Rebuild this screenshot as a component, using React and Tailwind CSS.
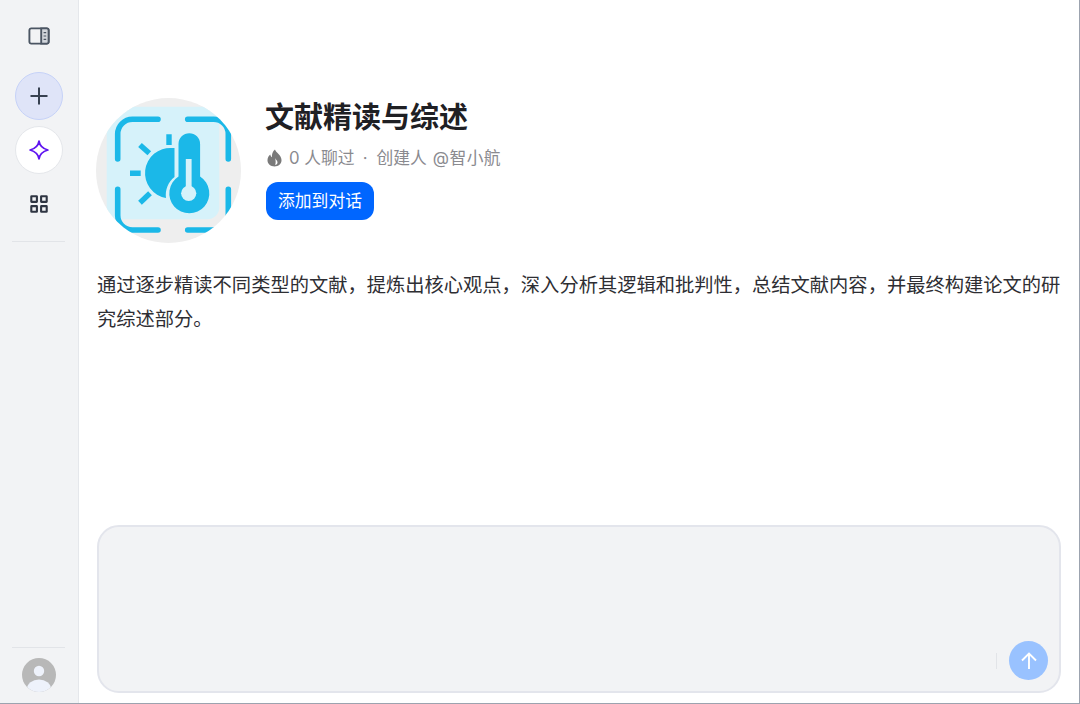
import React from "react";

function PanelIcon() {
  return (
    <svg width="22" height="18" viewBox="0 0 22 18" fill="none">
      <rect x="1.4" y="1.4" width="19.2" height="15.2" rx="1.8" stroke="#4b5563" strokeWidth="1.9" />
      <path d="M13.2 1.4H18.8a1.8 1.8 0 0 1 1.8 1.8V14.8a1.8 1.8 0 0 1-1.8 1.8H13.2Z" fill="#d1d5db" stroke="#4b5563" strokeWidth="1.9" />
      <path d="M15.6 5.6h2.6M15.6 9h2.6M15.6 12.4h2.6" stroke="#4b5563" strokeWidth="1.2" />
    </svg>
  );
}

function Sparkle() {
  return (
    <svg width="22" height="22" viewBox="0 0 22 22" fill="none">
      <path d="M11 2.1C11.6 6 13.4 9.2 19.9 11C13.4 12.8 11.6 16 11 19.9C10.4 16 8.6 12.8 2.1 11C8.6 9.2 10.4 6 11 2.1Z" stroke="#5f14f0" strokeWidth="1.8" strokeLinejoin="round" />
    </svg>
  );
}

function Grid() {
  return (
    <svg width="20" height="20" viewBox="0 0 20 20" fill="none" stroke="#2f3542" strokeWidth="2.1">
      <rect x="2.3" y="2.3" width="5.6" height="5.6" rx="0.3" />
      <rect x="12.1" y="2.3" width="5.6" height="5.6" rx="0.3" />
      <rect x="2.3" y="12.1" width="5.6" height="5.6" rx="0.3" />
      <rect x="12.1" y="12.1" width="5.6" height="5.6" rx="0.3" />
    </svg>
  );
}

function Logo() {
  const c = "#1bb8e8";
  const bg = "#d6f2fa";
  return (
    <svg width="145" height="145" viewBox="0 0 145 145" className="block">
      <defs>
        <clipPath id="circ"><circle cx="72.5" cy="72.5" r="72.5" /></clipPath>
      </defs>
      <circle cx="72.5" cy="72.5" r="72.5" fill="#eeeeee" />
      <g clipPath="url(#circ)">
        <rect x="10.7" y="8.7" width="112.6" height="112.6" rx="12" fill={bg} />
        <g fill="none" stroke={c} strokeWidth="5.6" strokeLinecap="round">
          <path d="M21.7 61V36a14.7 14.7 0 0 1 14.7-14.7H62" />
          <path d="M91.7 21.3H117.6a14.7 14.7 0 0 1 14.7 14.7V61" />
          <path d="M21.7 91.3V117.3a14.7 14.7 0 0 0 14.7 14.7H62" />
          <path d="M91.7 132H117.6a14.7 14.7 0 0 0 14.7-14.7V91.3" />
        </g>
        <g fill="none" stroke={c} strokeWidth="5.4">
          <path d="M73 36.3V47" />
          <path d="M44 47L53.3 55.3" />
          <path d="M34 75.3H44.7" />
          <path d="M44 104.7L54 95.3" />
        </g>
        <path d="M75.7 50A25.2 25.2 0 0 0 70 100C69 92 72 84 78.5 79V50Z" fill={c} />
        <path d="M82.5 78.5V46a10.8 10.8 0 0 1 21.6 0V78.5a20 20 0 1 1 -21.6 0Z" fill={c} />
        <rect x="89.8" y="61" width="5.8" height="30" fill={bg} />
        <circle cx="92.7" cy="95.3" r="7.6" fill={bg} />
      </g>
    </svg>
  );
}

function Flame() {
  return (
    <svg width="15" height="18" viewBox="0 0 16 19" className="ml-[1px]">
      <path d="M8.5 0.5C9.2 3.6 15.5 6.5 15.5 12C15.5 16 12.2 18.5 8 18.5C3.8 18.5 0.5 16 0.5 12C0.5 9 2 7.2 3.5 5.8C3.8 7.3 4.4 8.2 5.3 8.6C5 5.5 6 2.5 8.5 0.5Z" fill="#7a7a7a" />
      <path d="M8.6 9.5C9 11 11.2 12 11.2 14.2C11.2 15.9 10 16.8 8.6 16.8C9.6 15.4 9.4 12.4 8.6 9.5Z" fill="#ffffff" />
    </svg>
  );
}

function Avatar() {
  return (
    <svg width="34" height="34" viewBox="0 0 34 34">
      <defs><clipPath id="av"><circle cx="17" cy="17" r="17" /></clipPath></defs>
      <circle cx="17" cy="17" r="17" fill="#b8b8b8" />
      <g clipPath="url(#av)">
        <circle cx="17" cy="13" r="5.2" fill="#eef2fb" />
        <ellipse cx="17" cy="31" rx="12" ry="9.5" fill="#eef2fb" />
      </g>
    </svg>
  );
}

export default function App() {
  return (
    <div className="w-[1080px] h-[704px] flex overflow-hidden bg-white border-r border-b border-[#9ca3af] font-['Inter','Noto_Sans_CJK_SC',sans-serif]">
      <aside className="w-[79px] shrink-0 h-full bg-[#f2f3f5] border-r border-[#e5e7eb] flex flex-col items-center pr-[1px]">
        <div className="h-[72px] w-full flex items-center justify-center">
          <PanelIcon />
        </div>
        <button className="w-[48px] h-[48px] rounded-full bg-[#dfe4f8] border border-[#c6d2f8] flex items-center justify-center">
          <svg width="20" height="20" viewBox="0 0 20 20" stroke="#374151" strokeWidth="2" fill="none">
            <path d="M10 1.5V18.5M1.5 10H18.5" />
          </svg>
        </button>
        <button className="mt-[6px] w-[48px] h-[48px] rounded-full bg-white border border-[#e5e7eb] flex items-center justify-center">
          <Sparkle />
        </button>
        <div className="mt-[6px] h-[48px] flex items-center justify-center">
          <Grid />
        </div>
        <div className="mt-[13px] w-[53px] h-px bg-[#e2e4e8]" />
        <div className="flex-1" />
        <div className="w-[53px] h-px bg-[#e2e4e8]" />
        <div className="mt-[10px] mb-[11px]">
          <Avatar />
        </div>
      </aside>

      <main className="flex-1 min-w-0 h-full flex flex-col pl-[18px] pr-[18px] pt-[98px] pb-[10px]">
        <section className="flex gap-[24px]">
          <div className="w-[145px] h-[145px] -ml-[1px] mr-[1px] shrink-0"><Logo /></div>
          <div className="flex flex-col items-start pt-[1px]">
            <h1 className="text-[29px] leading-[38px] font-bold text-[#1f2024] -ml-[1px]">文献精读与综述</h1>
            <div className="mt-[9px] flex items-center text-[16.8px] leading-[24px] text-[#8a8a8f]">
              <Flame />
              <span className="ml-[7px]">0 人聊过</span>
              <span className="ml-[8px] mr-[9px]">·</span>
              <span>创建人</span>
              <span className="ml-[6px] tracking-[0.4px]">@智小航</span>
            </div>
            <button className="mt-[12px] h-[38px] w-[108px] rounded-[12px] bg-[#0066ff] text-white text-[16.8px] pt-[1px] flex items-center justify-center">添加到对话</button>
          </div>
        </section>
        <p className="mt-[25px] text-[19.28px] leading-[34px] text-[#2e2e33]">
          通过逐步精读不同类型的文献，提炼出核心观点，深入分析其逻辑和批判性，总结文献内容，并最终构建论文的研究综述部分。
        </p>
        <div className="flex-1" />
        <div className="h-[168px] rounded-[22px] bg-[#f2f3f5] border-2 border-[#e3e5ec] flex items-end justify-end pr-[11px] pb-[11px]">
          <div className="w-px h-[16px] bg-[#e2e4e8] mr-[12px] mb-[11px]" />
          <button className="w-[39px] h-[39px] rounded-full bg-[#99c2ff] flex items-center justify-center">
            <svg width="20" height="20" viewBox="0 0 20 20" fill="none" stroke="#fff" strokeWidth="1.9">
              <path d="M10 18V2.5M3 9.5L10 2.5L17 9.5" />
            </svg>
          </button>
        </div>
      </main>
    </div>
  );
}
